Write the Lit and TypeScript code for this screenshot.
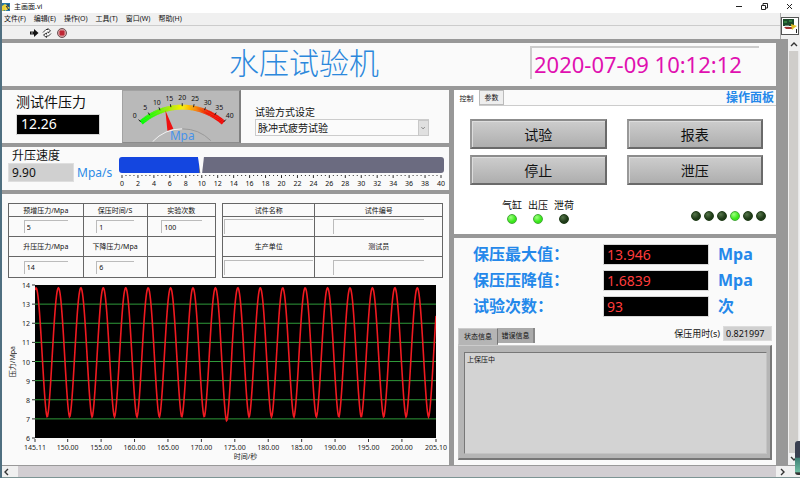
import { LitElement, html, svg, css } from "lit";
import { customElement, property } from "lit/decorators.js";

const shared = css`
  * { box-sizing: border-box; }
  button, input, select, textarea { font-family: inherit; color: inherit; margin: 0; border-radius: 0; }
  svg { display: block; }
`;

/** Arc gauge from 0 to 40 with a coloured band and a needle. */
@customElement("pressure-gauge")
class PressureGauge extends LitElement {
  static styles = [shared, css`
    :host { display: block; background: #b9b9b9; border: 1px solid #a2a2a2; border-right: 2px solid #7e7e7e; border-bottom-color: #8c8c8c; }
    .dial { width: 100%; height: 100%; }
    .num { font-size: 7px; fill: #111; text-anchor: middle; }
    .unit { font-size: 12px; fill: #4793ea; text-anchor: middle; }
  `];
  @property({ type: Number }) value = 0;

  private at(v: number, r: number): [number, number] {
    const a = ((v - 20) / 20) * 0.72;
    return [60 + r * Math.sin(a), 79 - r * Math.cos(a)];
  }
  private colour(v: number) {
    const stops: [number, number[]][] = [[0, [0, 255, 0]], [7, [60, 250, 0]], [14, [170, 240, 0]], [20, [255, 240, 0]], [26, [250, 130, 0]], [31, [240, 30, 0]], [40, [245, 0, 0]]];
    let i = 1;
    while (i < stops.length - 1 && stops[i][0] < v) i++;
    const [a, ca] = stops[i - 1], [b, cb] = stops[i];
    const t = (v - a) / (b - a);
    return `rgb(${ca.map((c, k) => Math.round(c + (cb[k] - c) * t)).join(",")})`;
  }
  render() {
    const band = Array.from({ length: 80 }, (_, i) => {
      const [x1, y1] = this.at(i / 2, 63), [x2, y2] = this.at(i / 2 + 0.6, 63);
      return svg`<line x1=${x1} y1=${y1} x2=${x2} y2=${y2} stroke=${this.colour(i / 2)} stroke-width="5"/>`;
    });
    const marks = [0, 5, 10, 15, 20, 25, 30, 35, 40].map((v) => {
      const [x, y] = this.at(v, 73), [x1, y1] = this.at(v, 64), [x2, y2] = this.at(v, 67);
      return svg`<line x1=${x1} y1=${y1} x2=${x2} y2=${y2} stroke="#222"/><text class="num" x=${x} y=${y + 3}>${v}</text>`;
    });
    const [tx, ty] = this.at(this.value, 62);
    return html`<svg class="dial" viewBox="0 0 118 51" role="img" aria-label="压力 ${this.value} Mpa">
      <path d="M30 51A41 41 0 0 1 60 38" fill="none" stroke="#f4f4f4"/>
      <path d="M60 38A41 41 0 0 1 89 50" fill="none" stroke="#989898"/>
      ${band}${marks}
      <path d="M${tx} ${ty}L45 40L51 38Z" fill="#ee1010"/>
      <text class="unit" x="60" y="49">Mpa</text>
    </svg>`;
  }
}

@customElement("speed-slider")
class SpeedSlider extends LitElement {
  static styles = [shared, css`
    :host { display: block; }
    .range { -webkit-appearance: none; appearance: none; display: block; width: 100%; height: 16px; border-radius: 3px; }
    .range::-webkit-slider-thumb { -webkit-appearance: none; width: 6px; height: 16px; background: #fafafa; clip-path: polygon(0 0, 100% 0, 70% 100%, 40% 100%); }
    .scale { width: calc(100% - 6px); height: 14px; margin: 2px 3px 0; overflow: visible; }
    .num { font-size: 7px; fill: #111; text-anchor: middle; }
  `];
  @property({ type: Number }) value = 0;
  render() {
    const p = (this.value / 40) * 100;
    return html`
      <input class="range" type="range" min="0" max="40" step="0.1" .value=${String(this.value)} aria-label="升压速度"
        style="background:linear-gradient(90deg,#1446e0 ${p}%,#6b6b80 ${p}%)">
      <svg class="scale">
        ${Array.from({ length: 81 }, (_, i) => svg`<line x1="${i * 1.25}%" x2="${i * 1.25}%" y1="0" y2=${i % 4 ? 1 : 3} stroke="#333"/>`)}
        ${Array.from({ length: 21 }, (_, i) => svg`<text class="num" x="${i * 5}%" y="11">${i * 2}</text>`)}
      </svg>`;
  }
}

@customElement("wave-chart")
class WaveChart extends LitElement {
  static styles = [shared, css`
    :host { display: grid; grid-template-columns: 14px 13px 1fr; grid-template-rows: minmax(120px, 1fr) 13px 13px; font-size: 7px; color: #222; }
    .ytitle { align-self: center; writing-mode: vertical-rl; text-orientation: sideways; transform: rotate(180deg); line-height: 10px; }
    .yaxis { width: 13px; height: 0; min-height: 100%; overflow: visible; }
    .plot { width: 100%; height: 0; min-height: 100%; background: #000; }
    .xaxis { grid-column: 3; width: 100%; height: 13px; overflow: visible; }
    .xtitle { grid-column: 3; justify-self: center; margin-left: 20px; line-height: 11px; }
    .end { text-anchor: end; }
    .mid { text-anchor: middle; }
    .grid { stroke: #2f9a3a; stroke-width: 1px; vector-effect: non-scaling-stroke; }
    .wave { fill: none; stroke: #f01a20; stroke-width: 1.6px; vector-effect: non-scaling-stroke; }
  `];
  render() {
    const x0 = 145.11, x1 = 205.1;
    const pts: string[] = [];
    for (let i = 0; i <= 802; i++) {
      const x = i / 2;
      const c = (1 + Math.cos(((x - 1) / 22.43) * 2 * Math.PI)) / 2;
      const deep = Math.abs(x - 191) < 6 ? 0.2 : 0;
      pts.push(`${x},${((14 - (7.1 - deep + (6.75 + deep) * Math.pow(c, 0.85))) * 100).toFixed(1)}`);
    }
    const ticks = [x0, 150, 155, 160, 165, 170, 175, 180, 185, 190, 195, 200, x1];
    return html`
      <div class="ytitle">压力/Mpa</div>
      <svg class="yaxis">
        ${[14, 13, 12, 11, 10, 9, 8, 7, 6].map((v, i) => svg`
          <text class="end" x="8" y="${i * 12.5}%" dy="3" fill="#222">${v}</text>
          <line x1="10" x2="13" y1="${i * 12.5}%" y2="${i * 12.5}%" stroke="#333"/>`)}
      </svg>
      <svg class="plot" viewBox="0 0 401 800" preserveAspectRatio="none" role="img" aria-label="压力曲线">
        ${[1, 2, 3, 4, 5, 6, 7].map((i) => svg`<line class="grid" x1="0" x2="401" y1=${i * 100} y2=${i * 100}/>`)}
        <polyline class="wave" points=${pts.join(" ")}/>
      </svg>
      <svg class="xaxis">
        ${ticks.map((t) => {
          const p = ((t - x0) / (x1 - x0)) * 100;
          return svg`<line x1="${p}%" x2="${p}%" y1="1" y2="4" stroke="#333"/><text class="mid" x="${p}%" y="12" fill="#222">${t.toFixed(2)}</text>`;
        })}
      </svg>
      <div class="xtitle">时间/秒</div>`;
  }
}

@customElement("app-root")
class AppRoot extends LitElement {
  static styles = [shared, css`
    :host { display: flex; flex-direction: column; min-height: 100vh; background: #fafafa; border-left: 2px solid #4f6f80; color: #111;
      font-family: "Noto Sans", "Noto Sans CJK SC", sans-serif; font-size: 7px; line-height: 10px; box-sizing: border-box; }
    .titlebar { display: flex; align-items: center; height: 13px; gap: 3px; background: #fff; }
    .caption { flex: 1; }
    .winbtn { width: 22px; height: 13px; padding: 0; border: 0; background: none; display: flex; justify-content: center; align-items: center; }
    .bars { display: flex; background: #f0f0f0; }
    .barcol { flex: 1; border-right: 1px solid #aaa; }
    .menu { display: flex; gap: 8px; height: 13px; padding: 0 2px; border-bottom: 1px solid #ccc; }
    .menu button { padding: 0; border: 0; background: none; font-size: 7px; line-height: 12px; }
    .tools { display: flex; align-items: center; gap: 3px; height: 13px; padding-left: 27px; }
    .tools button { padding: 0; border: 0; background: none; display: block; }
    .vi { width: 19px; display: flex; align-items: center; }
    .body { flex: 1; display: flex; }
    .front { flex: 1; display: flex; flex-direction: column; gap: 4px; padding: 4px 12px 0 0; background: #989898; }
    .panel { background: #fafafa; }
    .head { display: flex; align-items: center; justify-content: flex-end; padding: 2px 17px 6px; gap: 151px; height: 43px; }
    .head h1 { margin: 0; font-weight: 300; font-size: 30px; line-height: 33px; color: #2c88dc; white-space: nowrap; }
    .clock { width: 229px; padding: 0 2px; border: 0; border-top: 2px solid #ccc; border-left: 2px solid #ccc; background: none; font-size: 22px; height: 33px; line-height: 30px; color: #e010b0; }
    .cols { flex: 1; display: grid; grid-template-columns: 447fr 322fr; gap: 5px; }
    .col { display: flex; flex-direction: column; gap: 4px; min-width: 0; }
    .pressure { display: flex; height: 53px; }
    .now { width: 120px; padding: 3px 0 0 14px; }
    .h14 { display: block; font-size: 14px; line-height: 18px; }
    .dark { display: block; background: #000; border: 1px solid #d8d8d8; padding: 0 4px; }
    .now .dark { width: 84px; height: 21px; margin-top: 3px; font-size: 14px; color: #fff; }
    .gauge { width: 120px; }
    .mode { flex: 1; padding: 16px 20px 0 14px; font-size: 10px; line-height: 13px; }
    .mode label { display: block; }
    .combo { display: grid; width: 174px; align-items: center; }
    .combo select { grid-area: 1 / 1; width: 100%; height: 17px; padding: 0 2px; -webkit-appearance: none; appearance: none; font-size: 10px; border: 1px solid #ccc; background: #fbfbfb; }
    .combo .arrow { grid-area: 1 / 1; justify-self: end; width: 11px; height: 16px; background: #e0e0e0; border: 1px solid #c8c8c8; pointer-events: none; }
    .speed { display: flex; height: 43px; }
    .set { width: 115px; padding: 2px 0 0 6px; }
    .set label { display: block; padding-left: 4px; font-size: 12px; line-height: 14px; }
    .setrow { display: flex; gap: 3px; align-items: center; font-size: 12px; color: #2c8ae6; }
    .setrow input { width: 66px; height: 19px; padding: 0 3px; border: 1px solid #dedede; background: #d0d0d0; font-size: 12px; color: #111; }
    .slider { flex: 1; margin: 10px 5px 0 2px; }
    .data { flex: 1; display: flex; flex-direction: column; gap: 7px; padding: 9px 6px 1px; }
    .tables { display: flex; gap: 6px; }
    table { border-collapse: collapse; table-layout: fixed; line-height: 9px; }
    .ta { flex: 208; width: 0; }
    .tb { flex: 221; width: 0; }
    .ta table, .tb table { width: 100%; }
    th, td { border: 1px solid #666; padding: 0; font-weight: 400; text-align: center; height: 20px; }
    .short th { height: 13px; }
    .tall td { height: 21px; }
    .w36 { width: 36%; } .w31 { width: 31%; } .w42 { width: 42%; }
    td input { display: block; width: 60%; height: 13px; margin: 0 auto; padding: 0 2px; font-size: 7px; border: 0; border-top: 1px solid #bbb; border-left: 1px solid #bbb; background: none; }
    .tb td input { width: 72%; height: 15px; }
    .tb td:first-child input { width: 98%; }
    .chart { flex: 1; margin-right: 7px; }
    .tabs { display: flex; align-items: flex-start; }
    .tabs button { padding: 0; font-size: 7px; line-height: 13px; }
    .ops { height: 144px; }
    .opsbar { justify-content: space-between; border-bottom: 1px solid #ccc; height: 16px; }
    .on { width: 25px; height: 16px; border: 0; background: #fff; }
    .off { width: 25px; height: 15px; border: 1px solid #bbb; background: #eee; }
    .opsbar h2 { margin: 0 2px 0 auto; font-size: 12px; line-height: 16px; color: #2488ea; }
    .opsbody { background: #fff; height: 128px; padding: 13px 10px 0 16px; }
    .keys { display: grid; grid-template-columns: 1fr 1fr; gap: 6px 20px; padding-right: 3px; }
    .keys button { height: 30px; border: 2px solid; border-color: #8c8c8c #6a6a6a #6a6a6a #999; background: linear-gradient(#cdcdcd, #aeaeae); box-shadow: inset 1px 1px 0 #ddd; font-size: 14px; padding: 0; }
    .lamps { display: flex; justify-content: space-between; align-items: flex-end; padding: 14px 0 0 32px; font-size: 10px; line-height: 13px; }
    .named, .steps { display: flex; }
    .named { gap: 6px; }
    .steps { gap: 3px; padding-bottom: 3px; }
    .named span { display: flex; flex-direction: column; align-items: center; gap: 2px; }
    .lamp { width: 10px; height: 10px; border-radius: 50%; border: 1px solid #1d3a16; background: radial-gradient(circle at 35% 30%, #55754a, #1f3a18 60%); }
    .lit { border-color: #44a838; background: radial-gradient(circle at 35% 30%, #9dff80, #38e818 60%); }
    .result { flex: 1; display: flex; flex-direction: column; padding: 6px 4px 5px; }
    .vals { display: grid; grid-template-columns: 130px 106px 1fr; column-gap: 0; row-gap: 5px; padding-left: 15px; font-size: 16px; font-weight: 700; line-height: 21px; color: #2488ea; }
    .vals .dark { height: 21px; width: 106px; padding: 0 3px; font-size: 14px; color: #ff3c3c; }
    .vals span { padding-left: 9px; }
    .status { display: flex; justify-content: space-between; align-items: flex-end; height: 28px; }
    .on2 { width: 40px; height: 17px; border: 1px solid; border-color: #ccc #777 #b5b5b5 #ccc; background: #b5b5b5; }
    .off2 { width: 37px; height: 15px; border: 1px solid #888; border-width: 0 2px 0 0; background: #aaa; }
    .time { display: flex; align-items: center; gap: 3px; padding-bottom: 4px; font-size: 9px; }
    .time input { width: 49px; height: 15px; padding: 0 2px; border: 1px solid #dcdcdc; background: #d0d0d0; font-size: 9px; }
    .pane { flex: 1; display: flex; background: #b5b5b5; border: 1px solid #ccc; border-color: #ccc #777 #777 #bbb; border-width: 1px 2px 2px 1px; padding: 6px 3px 4px 5px; }
    .pane textarea { flex: 1; resize: none; border: 1px solid; border-color: #777 #c4c4c4 #c4c4c4 #777; background: #d3d3d3; padding: 2px; font-size: 7px; line-height: 10px; }
    .vbar { width: 12px; display: flex; flex-direction: column; align-items: center; background: #f0f0f0; }
    .vthumb { flex: 1; align-self: stretch; margin: 0 1px; background: #cfcdca; border-right: 1px solid #e8e8e8; }
    .arrow12 { height: 12px; flex: none; }
    .hbar { display: flex; align-items: center; height: 13px; border-top: 1px solid #999; border-bottom: 1px solid #7d9494; background: #f0f0f0; padding-right: 12px; }
    .hthumb { flex: 1; align-self: stretch; background: #d2ced2; margin: 0 0 0 4px; }
    .badge { position: absolute; right: 0; bottom: 3px; width: 5px; height: 34px; background: linear-gradient(#3a4050 48%, #3f7f74 50%, #70bfa4 92%, #333 93%); border-radius: 3px 0 0 3px; }
  `];

  private field(v: string, name: string) {
    return html`<input .value=${v} aria-label=${name}>`;
  }
  private lamp(on: boolean) {
    return html`<i class="lamp ${on ? "lit" : ""}"></i>`;
  }
  private chevron(d: string) {
    return html`<svg class="arrow12" width="12" height="12" viewBox="0 0 12 12"><path d=${d} fill="none" stroke="#333" stroke-width="1.4"/></svg>`;
  }

  render() {
    return html`
      <header class="titlebar">
        <svg width="9" height="10" viewBox="0 0 9 10"><rect y="1" width="8" height="8" fill="#2579a8"/><path d="M0 4L3 2V8L0 9Z" fill="#e9d13a"/><path d="M3 2L8 6L3 9Z" fill="#f4da3c"/><path d="M4 4L7 8M6 2V5" stroke="#224" fill="none"/></svg>
        <span class="caption">主画面.vi</span>
        <button class="winbtn" aria-label="最小化"><svg width="7" height="7"><path d="M0 3.5H6" stroke="#222"/></svg></button>
        <button class="winbtn" aria-label="还原"><svg width="7" height="7"><path d="M.5 2.5H4.500V6.500H.5ZM2 2V.5H6.500V5H5" fill="none" stroke="#222"/></svg></button>
        <button class="winbtn" aria-label="关闭"><svg width="7" height="7"><path d="M1 1L6 6M6 1L1 6" stroke="#222"/></svg></button>
      </header>
      <div class="bars">
        <div class="barcol">
          <nav class="menu">${["文件(F)", "编辑(E)", "操作(O)", "工具(T)", "窗口(W)", "帮助(H)"].map((m) => html`<button>${m}</button>`)}</nav>
          <div class="tools">
            <button aria-label="运行"><svg width="10" height="10" viewBox="0 0 10 10"><path d="M1 3.500H5V1L9.500 5L5 9V6.500H1Z" fill="#111"/><path d="M3 3.500V6.500" stroke="#aaa"/></svg></button>
            <button aria-label="连续运行"><svg width="10" height="10" viewBox="0 0 10 10"><path d="M1 4.500L4 1.500H6V.5L8.500 3L6 5V3.500M9 5.500L6.500 8H4.500V9.500L1.500 7L4.500 5V6.500" fill="#fff" stroke="#222" stroke-width=".9"/></svg></button>
            <button aria-label="中止"><svg width="13" height="10" viewBox="0 0 13 10"><circle cx="7" cy="5" r="4.500" fill="#d9a0a2" stroke="#6d5558"/><rect x="4.500" y="2.500" width="5" height="5" rx="1" fill="#c02634"/></svg></button>
          </div>
        </div>
        <div class="vi"><svg width="18" height="18" viewBox="0 0 18 18"><rect x=".5" y=".5" width="17" height="17" fill="#fff" stroke="#555"/><rect x="2" y="2" width="11" height="7" fill="#1d4a2a"/><path d="M3 5H6M8 4H11" stroke="#48b050"/><path d="M3 10H11V12H5Z" fill="#a03030"/><path d="M10 7L13 8L16 9L13 11L11 13Z" fill="#e2bf25"/><path d="M4 9H8" stroke="#ccc"/><path d="M15.500 12V16" stroke="#222"/></svg></div>
      </div>
      <div class="body">
        <main class="front">
          <section class="panel head">
            <h1>水压试验机</h1>
            <input class="clock" aria-label="时间" readonly value="2020-07-09 10:12:12">
          </section>
          <div class="cols">
            <div class="col">
              <section class="panel pressure">
                <div class="now"><span class="h14">测试件压力</span><output class="dark"><span class="h14">12.26</span></output></div>
                <pressure-gauge class="gauge" .value=${12.26}></pressure-gauge>
                <div class="mode">
                  <label for="mode">试验方式设定</label>
                  <div class="combo">
                    <select id="mode"><option>脉冲式疲劳试验</option></select>
                    <svg class="arrow" viewBox="0 0 11 16"><path d="M3 7L5 9L7 7" fill="none" stroke="#666"/></svg>
                  </div>
                </div>
              </section>
              <section class="panel speed">
                <div class="set"><label for="speed">升压速度</label><div class="setrow"><input id="speed" value="9.90"><span>Mpa/s</span></div></div>
                <speed-slider class="slider" .value=${9.9}></speed-slider>
              </section>
              <section class="panel data">
                <div class="tables">
                  <div class="ta"><table>
                    <tr class="short"><th class="w36">预增压力/Mpa</th><th class="w31">保压时间/S</th><th>实验次数</th></tr>
                    <tr><td>${this.field("5", "预增压力/Mpa")}</td><td>${this.field("1", "保压时间/S")}</td><td>${this.field("100", "实验次数")}</td></tr>
                    <tr><th>升压压力/Mpa</th><th>下降压力/Mpa</th><th></th></tr>
                    <tr class="tall"><td>${this.field("14", "升压压力/Mpa")}</td><td>${this.field("6", "下降压力/Mpa")}</td><td></td></tr>
                  </table></div>
                  <div class="tb"><table>
                    <tr class="short"><th class="w42">试件名称</th><th>试件编号</th></tr>
                    <tr><td>${this.field("", "试件名称")}</td><td>${this.field("", "试件编号")}</td></tr>
                    <tr><th>生产单位</th><th>测试员</th></tr>
                    <tr class="tall"><td>${this.field("", "生产单位")}</td><td>${this.field("", "测试员")}</td></tr>
                  </table></div>
                </div>
                <wave-chart class="chart"></wave-chart>
              </section>
            </div>
            <div class="col">
              <section class="panel ops">
                <div class="tabs opsbar"><button class="on">控制</button><button class="off">参数</button><h2>操作面板</h2></div>
                <div class="opsbody">
                  <div class="keys">${["试验", "报表", "停止", "泄压"].map((k) => html`<button>${k}</button>`)}</div>
                  <div class="lamps">
                    <div class="named"><span>气缸${this.lamp(true)}</span><span>出压${this.lamp(true)}</span><span>泄荷${this.lamp(false)}</span></div>
                    <div class="steps">${[0, 0, 0, 1, 0, 0].map((s) => this.lamp(!!s))}</div>
                  </div>
                </div>
              </section>
              <section class="panel result">
                <div class="vals">
                  <div>保压最大值：</div><input class="dark" aria-label="保压最大值" readonly value="13.946"><span>Mpa</span>
                  <div>保压压降值：</div><input class="dark" aria-label="保压压降值" readonly value="1.6839"><span>Mpa</span>
                  <div>试验次数：</div><input class="dark" aria-label="试验次数" readonly value="93"><span>次</span>
                </div>
                <div class="status">
                  <div class="tabs"><button class="on2">状态信息</button><button class="off2">错误信息</button></div>
                  <div class="time"><label for="used">保压用时(s)</label><input id="used" readonly value="0.821997"></div>
                </div>
                <div class="pane"><textarea aria-label="状态信息" .value=${"上保压中"}></textarea></div>
              </section>
            </div>
          </div>
        </main>
        <div class="vbar">${this.chevron("M3 7L6 4L9 7")}<div class="vthumb"></div>${this.chevron("M3 4L6 7L9 4")}</div>
      </div>
      <footer class="hbar">${this.chevron("M6 3L3 6L6 9")}<div class="hthumb"></div>${this.chevron("M5 3L8 6L5 9")}</footer>
      <i class="badge"></i>`;
  }
}
